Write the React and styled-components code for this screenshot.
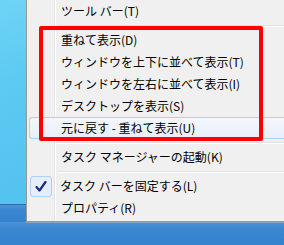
import React from 'react';
import styled, { createGlobalStyle } from 'styled-components';

const GlobalStyle = createGlobalStyle`
  html, body {
    margin: 0;
    padding: 0;
    width: 284px;
    height: 245px;
    overflow: hidden;
  }
`;

const items = [
  { label: 'ツール バー(T)' },
  { sep: true },
  { label: '重ねて表示(D)' },
  { label: 'ウィンドウを上下に並べて表示(T)' },
  { label: 'ウィンドウを左右に並べて表示(I)' },
  { label: 'デスクトップを表示(S)' },
  { label: '元に戻す - 重ねて表示(U)', hover: true },
  { sep: true },
  { label: 'タスク マネージャーの起動(K)' },
  { sep: true },
  { label: 'タスク バーを固定する(L)', checked: true },
  { label: 'プロパティ(R)' },
];

const App = () => {
  return (
    <>
      <GlobalStyle />
      <Screen>
        <Top>
          <Desktop>
            <Sky />
            <Bar />
          </Desktop>
          <Menu>
            <Gutter />
            {items.map((item, i) =>
              item.sep ? (
                <Separator key={i} />
              ) : (
                <Item key={i} $hover={item.hover}>
                  <Check $on={item.checked}>
                    {item.checked && (
                      <svg width="12" height="11" viewBox="0 0 12 11">
                        <path
                          d="M1.5 6 L4.5 9.5 L10.5 1"
                          fill="none"
                          stroke="#1b2a86"
                          strokeWidth="2.2"
                          strokeLinecap="round"
                          strokeLinejoin="round"
                        />
                      </svg>
                    )}
                  </Check>
                  <Label>{item.label}</Label>
                </Item>
              )
            )}
            <RedFrame />
          </Menu>
        </Top>
        <Bar />
      </Screen>
    </>
  );
};

export default App;

const Screen = styled.div`
  width: 284px;
  height: 245px;
  display: flex;
  flex-direction: column;
  font-family: "Noto Sans CJK JP", "Noto Sans", sans-serif;
`;

const Top = styled.div`
  display: flex;
  height: 222px;
`;

const Desktop = styled.div`
  width: 26px;
  display: flex;
  flex-direction: column;
`;

const Sky = styled.div`
  height: 204px;
  background: linear-gradient(160deg, #6fd3f6 0%, #5ccaf2 40%, #52c2ef 100%);
  border-bottom: 1px solid #2a6fa8;
`;

const Bar = styled.div`
  flex: 1;
  background: linear-gradient(180deg, #4a93d6 0%, #3a87d0 30%, #3583cd 100%);
`;

const Menu = styled.div`
  position: relative;
  flex: 1;
  display: flex;
  flex-direction: column;
  background: #f0f0f0;
  border-left: 1px solid #979797;
  border-bottom: 1px solid #979797;
  box-shadow: 0 1px 0 #8aa6c0;
  padding-bottom: 2px;
`;

const Gutter = styled.div`
  position: absolute;
  left: 27px;
  top: 0;
  bottom: 0;
  width: 1px;
  background: #e2e3e3;
  box-shadow: 1px 0 0 #ffffff;
`;

const Item = styled.div`
  position: relative;
  height: 22px;
  display: flex;
  align-items: center;
  margin-left: 2px;
  box-sizing: border-box;
  border: 1px solid ${(p) => (p.$hover ? '#aecff7' : 'transparent')};
  border-right: none;
  border-radius: 3px 0 0 3px;
  background: ${(p) =>
    p.$hover ? 'linear-gradient(180deg, #f3f7fc 0%, #e8effa 100%)' : 'transparent'};
`;

const Check = styled.div`
  width: 22px;
  height: 21px;
  margin-left: ${(p) => (p.$on ? '0' : '1px')};
  flex: none;
  box-sizing: border-box;
  display: flex;
  align-items: center;
  justify-content: center;
  border: 1px solid ${(p) => (p.$on ? '#aecff7' : 'transparent')};
  border-radius: 3px;
  background: ${(p) => (p.$on ? '#e6eefb' : 'transparent')};
`;

const Label = styled.span`
  margin-left: 8px;
  font-size: 12px;
  line-height: 14px;
  color: #000;
  white-space: nowrap;
`;

const Separator = styled.div`
  height: 7px;
  margin-left: 30px;
  display: flex;
  align-items: center;
  &::before {
    content: '';
    display: block;
    width: 100%;
    height: 1px;
    background: #e0e0e0;
    box-shadow: 0 1px 0 #ffffff;
  }
`;

const RedFrame = styled.div`
  position: absolute;
  left: 12px;
  top: 26px;
  width: 224px;
  height: 115px;
  box-sizing: border-box;
  border: 4px solid #ff0000;
  border-radius: 2px;
  pointer-events: none;
`;
